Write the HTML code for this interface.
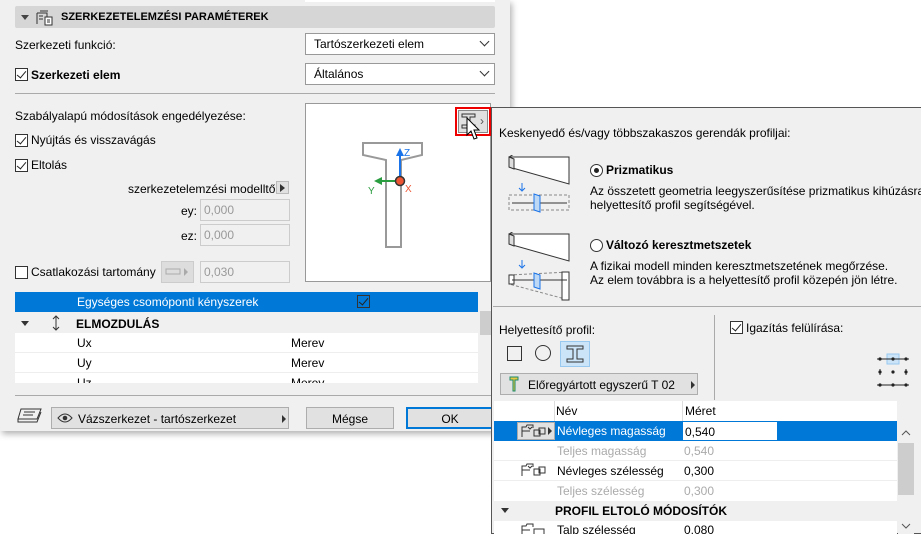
<!DOCTYPE html>
<html><head><meta charset="utf-8"><style>
*{box-sizing:border-box;margin:0;padding:0}
body{width:921px;height:534px;background:#fff;position:relative;overflow:hidden;font-family:"Liberation Sans",sans-serif;font-size:12px;color:#000}
.a{position:absolute;white-space:nowrap}
.dlg{left:0;top:0;width:510px;height:431px;background:#f0f0f0;box-shadow:2px 3px 6px rgba(0,0,0,.3)}
.sel{background:#fff;border:1px solid #999;height:22px;padding:3px 8px;font-size:12px}
.chev{position:absolute;right:6px;top:4px;width:7px;height:7px;border-right:1.3px solid #333;border-bottom:1.3px solid #333;transform:rotate(45deg)}
.cb{width:13px;height:13px;border:1px solid #333;background:#fff}
.cb.c::after{content:"";position:absolute;left:3px;top:0px;width:4px;height:8px;border-right:1.5px solid #222;border-bottom:1.5px solid #222;transform:rotate(40deg)}
.inp{background:#f0f0f0;border:1px solid #ccc;height:22px;padding:3px 3px;color:#999}
.btn{background:#e1e1e1;border:1px solid #adadad;text-align:center;height:22px;padding-top:4px}
.pop{left:491px;top:107px;width:430px;height:427px;background:#f0f0f0;border:1px solid #555;border-right:none}
.row{position:absolute;left:0;width:100%;height:20px;background:#fff;border-bottom:1px solid #eee}
</style></head><body>
<div class="a dlg">
 <div class="a" style="left:305px;top:0;width:190px;height:2px;background:#fff"></div>
 <div class="a" style="left:15px;top:6px;width:480px;height:22px;background:#d6d6d6;border-radius:2px"></div>
 <div class="a" style="left:21px;top:15px;border-left:4px solid transparent;border-right:4px solid transparent;border-top:5px solid #444"></div>
 <svg class="a" style="left:36px;top:10px" width="18" height="16"><path d="M1 3h10v4M1 3v11M4 1h8M3 6h4M3 9h4" stroke="#333" fill="none"/><rect x="9" y="7" width="7" height="8" stroke="#333" fill="#fff"/><path d="M11 10h3M11 12h3" stroke="#333"/></svg>
 <div class="a" style="left:61px;top:11px;font-weight:bold;font-size:11px">SZERKEZETELEMZÉSI PARAMÉTEREK</div>
 <div class="a" style="left:15px;top:38px">Szerkezeti funkció:</div>
 <div class="a sel" style="left:305px;top:33px;width:190px">Tartószerkezeti elem<span class="chev"></span></div>
 <div class="a cb c" style="left:15px;top:68px"></div>
 <div class="a" style="left:31px;top:68px;font-weight:bold">Szerkezeti elem</div>
 <div class="a sel" style="left:305px;top:63px;width:190px">Általános<span class="chev"></span></div>
 <div class="a" style="left:15px;top:93px;width:480px;height:1px;background:#aaa"></div>
 <div class="a" style="left:15px;top:109px">Szabályalapú módosítások engedélyezése:</div>
 <div class="a cb c" style="left:15px;top:134px"></div><div class="a" style="left:31px;top:133px">Nyújtás és visszavágás</div>
 <div class="a cb c" style="left:15px;top:159px"></div><div class="a" style="left:31px;top:158px">Eltolás</div>
 <div class="a" style="left:128px;top:182px">szerkezetelemzési modelltől</div>
 <div class="a" style="left:276px;top:181px;width:13px;height:13px;background:#e1e1e1;border:1px solid #bbb"><div class="a" style="left:3px;top:2px;border-top:4px solid transparent;border-bottom:4px solid transparent;border-left:5px solid #333"></div></div>
 <div class="a" style="left:181px;top:204px">ey:</div><div class="a inp" style="left:200px;top:199px;width:90px">0,000</div>
 <div class="a" style="left:181px;top:229px">ez:</div><div class="a inp" style="left:200px;top:224px;width:90px">0,000</div>
 <div class="a cb" style="left:15px;top:266px"></div><div class="a" style="left:31px;top:265px">Csatlakozási tartomány</div>
 <div class="a" style="left:161px;top:261px;width:33px;height:22px;background:#ddd;border:1px solid #ccc"></div>
 <svg class="a" style="left:165px;top:267px" width="26" height="10"><rect x="1" y="2" width="14" height="5" fill="none" stroke="#aaa"/><path d="M19 1l4 4-4 4z" fill="#aaa"/></svg>
 <div class="a inp" style="left:200px;top:261px;width:90px">0,030</div>
 <div class="a" style="left:305px;top:103px;width:186px;height:179px;background:#fff;border:1px solid #999"></div>
 <svg class="a" style="left:360px;top:138px" width="70" height="110"><path d="M10 3H69V15L48 20V107H33V20L10 15Z" stroke="#999" stroke-width="2" fill="#fff" transform="translate(-7 2)"/><path d="M40 44V14" stroke="#1a73e8" stroke-width="2"/><path d="M36 18L40 10L44 18Z" fill="#1a73e8"/><text x="44" y="18" font-size="10" fill="#1a73e8" font-family="Liberation Sans">Z</text><path d="M38 43H18" stroke="#2a9d40" stroke-width="2"/><path d="M22 39L14 43L22 47Z" fill="#2a9d40"/><text x="8" y="56" font-size="10" fill="#2a9d40" font-family="Liberation Sans">Y</text><circle cx="40" cy="43" r="4.5" fill="#e53" stroke="#333" stroke-width="1.5"/><text x="45" y="54" font-size="10" fill="#e53" font-family="Liberation Sans">X</text></svg>
 <div class="a" style="left:455px;top:107px;width:36px;height:29px;border:2px solid #e00"></div>
 <div class="a" style="left:458px;top:110px;width:30px;height:23px;background:#e1e1e1;border:1px solid #888"></div>
 <svg class="a" style="left:461px;top:113px" width="16" height="16"><path d="M1 1h13v3H9v8h5v3H1v-3h5V4H1z" stroke="#333" fill="none"/></svg>
 <div class="a" style="left:480px;top:114px;color:#555">›</div>
 <div class="a" style="left:15px;top:292px;width:463px;height:20px;background:#0078d7"></div>
 <div class="a" style="left:77px;top:295px;color:#fff">Egységes csomóponti kényszerek</div>
 <div class="a cb c" style="left:357px;top:295px;background:#0078d7;border-color:#333"></div>
 <div class="a" style="left:15px;top:313px;width:463px;height:20px;background:#f0f0f0"></div>
 <div class="a" style="left:21px;top:321px;border-left:4px solid transparent;border-right:4px solid transparent;border-top:5px solid #333"></div>
 <svg class="a" style="left:52px;top:315px" width="8" height="16"><path d="M4 1v14M1 4l3-3 3 3M1 12l3 3 3-3" stroke="#333" fill="none"/></svg>
 <div class="a" style="left:76px;top:317px;font-weight:bold">ELMOZDULÁS</div>
 <div class="a" style="left:15px;top:333px;width:463px;height:50px;background:#fff;overflow:hidden">
  <div class="row" style="top:0"><span class="a" style="left:62px;top:3px">Ux</span><span class="a" style="left:276px;top:3px">Merev</span></div>
  <div class="row" style="top:20px"><span class="a" style="left:62px;top:3px">Uy</span><span class="a" style="left:276px;top:3px">Merev</span></div>
  <div class="row" style="top:40px"><span class="a" style="left:62px;top:3px">Uz</span><span class="a" style="left:276px;top:3px">Merev</span></div>
 </div>
 <div class="a" style="left:478px;top:292px;width:17px;height:91px;background:#f0f0f0"></div>
 <div class="a" style="left:480px;top:311px;width:14px;height:24px;background:#cdcdcd"></div>
 <div class="a" style="left:15px;top:395px;width:480px;height:1px;background:#aaa"></div>
 <svg class="a" style="left:17px;top:407px" width="26" height="18"><path d="M4 2h20l-4 10H1z M1 12v3h19l4-10" stroke="#333" fill="none"/><path d="M7 5h11M6 8h10" stroke="#333"/></svg>
 <div class="a btn" style="left:51px;top:407px;width:238px;text-align:left;padding-left:26px">Vázszerkezet - tartószerkezet</div>
 <svg class="a" style="left:57px;top:412px" width="16" height="12"><path d="M1 6Q8-2 15 6Q8 14 1 6Z" stroke="#333" fill="none"/><circle cx="8" cy="6" r="2.3" fill="#333"/></svg>
 <div class="a" style="left:282px;top:415px;border-top:4px solid transparent;border-bottom:4px solid transparent;border-left:4px solid #333"></div>
 <div class="a btn" style="left:306px;top:407px;width:88px">Mégse</div>
 <div class="a btn" style="left:406px;top:407px;width:88px;border:2px solid #0078d7;padding-top:3px">OK</div>
</div>
<svg class="a" style="left:466px;top:117px" width="18" height="26"><path d="M1 1V18L5 14L8 22L11 21L8 13H13Z" fill="#fff" stroke="#000"/></svg>
<div class="a pop">
 <div class="a" style="left:7px;top:18px">Keskenyedő és/vagy többszakaszos gerendák profiljai:</div>
 <svg class="a" style="left:15px;top:47px" width="66" height="60"><path d="M2 2h60v27L2 12z M2 2l5-3" stroke="#333" fill="#fff"/><path d="M2 2v10l5 2V4z" fill="#ddd" stroke="#333"/><path d="M15 28v7" stroke="#1a73e8"/><path d="M12 33l3 3 3-3" stroke="#1a73e8" fill="none"/><rect x="2" y="40" width="60" height="15" stroke="#888" stroke-dasharray="3 2" fill="none"/><path d="M5 48h55" stroke="#333"/><path d="M27 39l6 2v16l-6-2z" fill="#bcd8f5" stroke="#1a73e8"/></svg>
 <div class="a" style="left:98px;top:56px;width:13px;height:13px;border:1px solid #333;border-radius:50%;background:#fff"><div class="a" style="left:3px;top:3px;width:5px;height:5px;border-radius:50%;background:#222"></div></div>
 <div class="a" style="left:114px;top:55px;font-weight:bold">Prizmatikus</div>
 <div class="a" style="left:98px;top:76px;line-height:14px">Az összetett geometria leegyszerűsítése prizmatikus kihúzásra,<br>helyettesítő profil segítségével.</div>
 <svg class="a" style="left:15px;top:124px" width="66" height="70"><path d="M2 2h60v27L2 12z M2 2l5-3" stroke="#333" fill="#fff"/><path d="M2 2v10l5 2V4z" fill="#ddd" stroke="#333"/><path d="M15 28v7" stroke="#1a73e8"/><path d="M12 33l3 3 3-3" stroke="#1a73e8" fill="none"/><path d="M2 43L62 40v28L2 52z" stroke="#888" stroke-dasharray="3 2" fill="none"/><path d="M2 43h5v9H2z M55 40h7v28h-7z" fill="#fff" stroke="#333"/><path d="M5 48h55" stroke="#333"/><path d="M27 41l6 2v14l-6-2z" fill="#bcd8f5" stroke="#1a73e8"/></svg>
 <div class="a" style="left:98px;top:131px;width:13px;height:13px;border:1px solid #333;border-radius:50%;background:#fff"></div>
 <div class="a" style="left:114px;top:130px;font-weight:bold">Változó keresztmetszetek</div>
 <div class="a" style="left:98px;top:151px;line-height:14px">A fizikai modell minden keresztmetszetének megőrzése.<br>Az elem továbbra is a helyettesítő profil közepén jön létre.</div>
 <div class="a" style="left:1px;top:198px;width:428px;height:1px;background:#aaa"></div>
 <div class="a" style="left:7px;top:215px">Helyettesítő profil:</div>
 <div class="a" style="left:15px;top:238px;width:15px;height:15px;border:1px solid #333"></div>
 <div class="a" style="left:43px;top:237px;width:16px;height:16px;border:1px solid #333;border-radius:50%"></div>
 <div class="a" style="left:68px;top:233px;width:30px;height:26px;background:#cce4f7;border:1px solid #99c9ef"></div>
 <svg class="a" style="left:73px;top:236px" width="20" height="20"><path d="M2 2h16v3h-6v10h6v3H2v-3h6V5H2z" stroke="#333" fill="none"/></svg>
 <div class="a btn" style="left:8px;top:265px;width:198px;text-align:left;padding-left:27px">Előregyártott egyszerű T 02</div>
 <svg class="a" style="left:17px;top:268px" width="10" height="16"><path d="M1 1h8v3H6v11H4V4H1z" fill="#e8c840" stroke="#1a8a6a"/></svg>
 <div class="a" style="left:199px;top:273px;border-top:4px solid transparent;border-bottom:4px solid transparent;border-left:4px solid #333"></div>
 <div class="a" style="left:222px;top:207px;width:1px;height:85px;background:#aaa"></div>
 <div class="a cb c" style="left:238px;top:213px"></div><div class="a" style="left:254px;top:213px">Igazítás felülírása:</div>
 <svg class="a" style="left:384px;top:245px" width="36" height="40"><rect x="11" y="1" width="12" height="10" fill="#cce4f7" stroke="#99c9ef"/><g fill="#222"><circle cx="4" cy="6" r="1.6"/><circle cx="17" cy="6" r="1.6"/><circle cx="30" cy="6" r="1.6"/><circle cx="4" cy="19" r="1.6"/><circle cx="17" cy="19" r="1.6"/><circle cx="30" cy="19" r="1.6"/><circle cx="4" cy="32" r="1.6"/><circle cx="17" cy="32" r="1.6"/><circle cx="30" cy="32" r="1.6"/></g><path d="M1 6h32M1 32h32M4 16v6M30 16v6" stroke="#222"/></svg>
 <div class="a" style="left:2px;top:293px;width:403px;height:133px;background:#fff"></div>
 <div class="a" style="left:62px;top:293px;width:1px;height:20px;background:#ddd"></div>
 <div class="a" style="left:190px;top:293px;width:1px;height:20px;background:#ddd"></div>
 <div class="a" style="left:64px;top:296px">Név</div><div class="a" style="left:193px;top:296px">Méret</div>
 <div class="a" style="left:2px;top:313px;width:188px;height:20px;background:#0078d7"></div>
 <div class="a" style="left:286px;top:313px;width:119px;height:20px;background:#0078d7"></div>
 <div class="a" style="left:25px;top:314px;width:38px;height:18px;background:#e1e1e1;border:1px solid #aaa"></div>
 <svg class="a" style="left:28px;top:315px" width="34" height="16"><path d="M2 14V4h4l1-2h6v3 M2 8h8 M8 4l2 2 2-2" stroke="#333" fill="none"/><rect x="14" y="7" width="6" height="6" stroke="#333" fill="none"/><rect x="19" y="5" width="6" height="6" stroke="#333" fill="none"/><path d="M28 4l4 4-4 4z" fill="#333"/></svg>
 <div class="a" style="left:65px;top:316px;color:#fff">Névleges magasság</div>
 <div class="a" style="left:190px;top:313px;width:96px;height:20px;background:#fff;padding:3px 2px;border:1px solid #0078d7">0,540</div>
 <div class="a" style="left:2px;top:333px;width:403px;height:20px;border-bottom:1px solid #eee"></div>
 <div class="a" style="left:65px;top:336px;color:#aaa">Teljes magasság</div><div class="a" style="left:192px;top:336px;color:#aaa">0,540</div>
 <svg class="a" style="left:28px;top:354px" width="34" height="16"><path d="M2 14V4h4l1-2h6v3 M2 8h8 M8 4l2 2 2-2" stroke="#333" fill="none"/><rect x="14" y="7" width="6" height="6" stroke="#333" fill="none"/><rect x="19" y="5" width="6" height="6" stroke="#333" fill="none"/></svg>
 <div class="a" style="left:65px;top:356px">Névleges szélesség</div><div class="a" style="left:192px;top:356px">0,300</div>
 <div class="a" style="left:2px;top:353px;width:403px;height:20px;border-bottom:1px solid #eee"></div>
 <div class="a" style="left:65px;top:376px;color:#aaa">Teljes szélesség</div><div class="a" style="left:192px;top:376px;color:#aaa">0,300</div>
 <div class="a" style="left:2px;top:393px;width:403px;height:20px;background:#f0f0f0"></div>
 <div class="a" style="left:9px;top:400px;border-left:4px solid transparent;border-right:4px solid transparent;border-top:5px solid #333"></div>
 <div class="a" style="left:63px;top:396px;font-weight:bold">PROFIL ELTOLÓ MÓDOSÍTÓK</div>
 <svg class="a" style="left:28px;top:414px" width="34" height="12"><path d="M2 12V4h4l1-2h6v3 M2 8h8" stroke="#333" fill="none"/><rect x="14" y="7" width="10" height="6" stroke="#333" fill="none"/></svg>
 <div class="a" style="left:65px;top:415px;height:11px;overflow:hidden">Talp szélesség</div>
 <div class="a" style="left:192px;top:415px;height:11px;overflow:hidden">0,080</div>
 <div class="a" style="left:406px;top:313px;width:16px;height:113px;background:#f0f0f0"></div>
 <div class="a" style="left:406px;top:335px;width:16px;height:52px;background:#cdcdcd"></div>
 <svg class="a" style="left:409px;top:322px" width="10" height="6"><path d="M1 5l4-4 4 4" stroke="#555" fill="none"/></svg>
 <svg class="a" style="left:409px;top:415px" width="10" height="6"><path d="M1 1l4 4 4-4" stroke="#555" fill="none"/></svg>
</div>
</body></html>
